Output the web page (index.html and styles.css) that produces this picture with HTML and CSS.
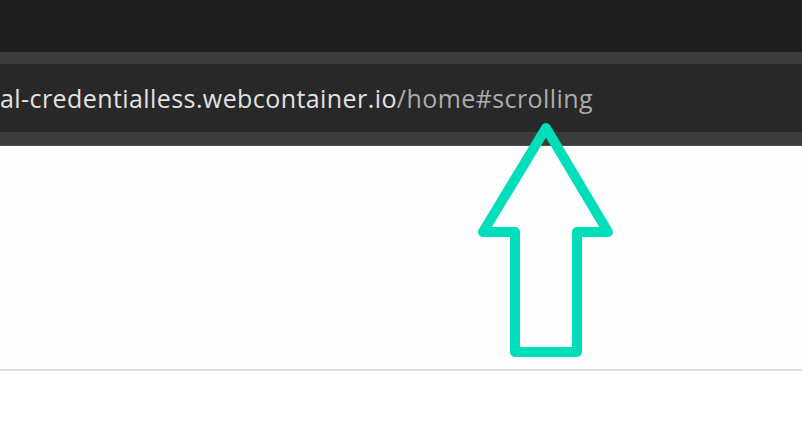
FILE: index.html
```html
<!DOCTYPE html>
<html>
<head>
<meta charset="utf-8">
<link rel="stylesheet" href="styles.css">
</head>
<body>
<div class="titlebar"></div>
<div class="toolbar">
  <div class="omnibox"><span class="host">al-credentialless.webcontainer.io</span><span class="path">/home#scrolling</span></div>
</div>
<div class="page">
  <div class="content"></div>
</div>
<svg class="arrow" width="802" height="430" viewBox="0 0 802 430">
  <path d="M546 128 L483 232 L515 232 L515 352 L577 352 L577 232 L608 232 Z" fill="none" stroke="#00dfb9" stroke-width="10" stroke-linejoin="round"/>
</svg>
</body>
</html>
```
FILE: styles.css
```css
html, body {
  margin: 0;
  padding: 0;
  background: #ffffff;
  overflow: hidden;
}
body {
  width: 802px;
  height: 430px;
  position: relative;
  font-family: "Open Sans", "Noto Sans", sans-serif;
}
.titlebar {
  height: 52px;
  background: #1f1f1f;
}
.toolbar {
  background: #3c3c3c;
  padding: 12px 0 13px;
  border-bottom: 1px solid #505050;
}
.omnibox {
  height: 68px;
  background: #282828;
  line-height: 68px;
  font-size: 25px;
  letter-spacing: 0.42px;
  white-space: nowrap;
  overflow: hidden;
}
.host {
  color: #e2e2e2;
}
.path {
  color: #acacac;
}
.page {
  background: #fefefe;
}
.content {
  height: 223px;
  border-bottom: 2px solid #e0e0e0;
}
.arrow {
  position: absolute;
  left: 0;
  top: 0;
}
```
